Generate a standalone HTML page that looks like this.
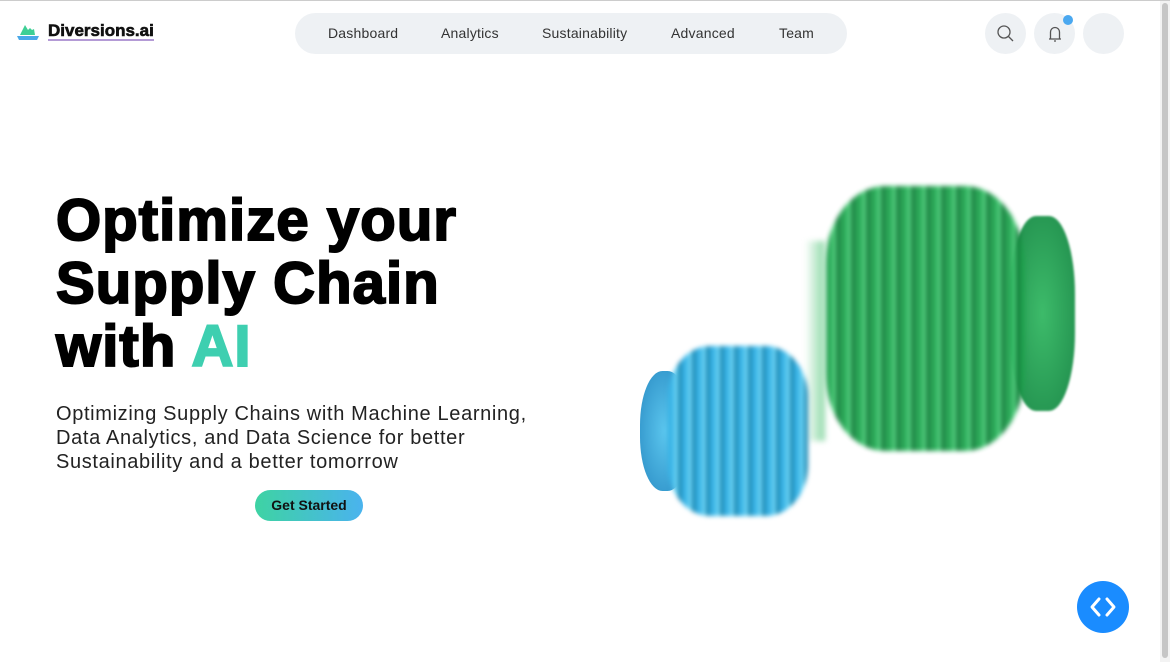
<!DOCTYPE html>
<html><head><style>
*{margin:0;padding:0;box-sizing:border-box}
body{width:1170px;height:661px;overflow:hidden;background:#fff;font-family:"Liberation Sans",sans-serif;position:relative;border-top:1px solid #ccc}
.logo{position:absolute;left:16px;top:21px;display:flex;align-items:center}
.logo span{font-weight:bold;font-size:17px;margin-left:8px;color:#111;border-bottom:2px solid #b49bd6;line-height:16px;-webkit-text-stroke:0.6px #111}
.nav{position:absolute;left:295px;top:12px;width:552px;height:41px;background:#eef1f4;border-radius:21px;font-size:14px;color:#333;letter-spacing:0.2px}
.nav a{position:absolute;top:12px}
.c{position:absolute;top:12px;width:41px;height:41px;border-radius:50%;background:#eef1f4}
h1{position:absolute;left:56px;top:188px;font-size:58px;line-height:63px;font-weight:900;color:#000;letter-spacing:1.1px;-webkit-text-stroke:2px #000}
h1 b{color:#3ecfb0;-webkit-text-stroke:2px #3ecfb0}
p{position:absolute;left:56px;top:401px;font-size:20px;line-height:24px;color:#222;letter-spacing:0.65px}
.btn{position:absolute;left:255px;top:489px;width:108px;height:31px;border-radius:16px;background:linear-gradient(90deg,#3ed3a3,#4ab3ee);font-size:14px;font-weight:bold;text-align:center;line-height:31px;color:#111}
.sb{position:absolute;right:0;top:0;width:10px;height:661px;background:#f3f3f3}
.sb div{position:absolute;left:2px;top:2px;width:6px;height:655px;border-radius:3px;background:#c6c6c6}
.fab{position:absolute;left:1077px;top:580px;width:52px;height:52px;border-radius:50%;background:#1a8cff}
</style></head><body>
<div class="logo"><svg width="24" height="20" viewBox="0 0 24 20"><path d="M4 13 L9 3 L12 8 L14 6 L16 8 L18 7 L19 13Z" fill="#3ecf95"/><path d="M1 14 H23 L21 18 H3Z" fill="#4aa8e8"/></svg><span>Diversions.ai</span></div>
<div class="nav"><a style="left:33px">Dashboard</a><a style="left:146px">Analytics</a><a style="left:247px">Sustainability</a><a style="left:376px">Advanced</a><a style="left:484px">Team</a></div>
<div class="c" style="left:985px"><svg width="41" height="41"><circle cx="19" cy="19" r="6" fill="none" stroke="#555" stroke-width="1.3"/><path d="M23.5 23.5 L28 28" stroke="#555" stroke-width="1.3"/></svg></div>
<div class="c" style="left:1034px"><svg width="41" height="41"><path d="M15 26 H27 M16.5 26 V19 a4.5 4.5 0 0 1 9 0 V26 M20 28 h2" fill="none" stroke="#555" stroke-width="1.3"/></svg></div>
<div style="position:absolute;left:1063px;top:14px;width:10px;height:10px;border-radius:50%;background:#4aa8f0"></div>
<div class="c" style="left:1083px"></div>
<h1>Optimize your<br>Supply Chain<br>with <b>AI</b></h1>
<p>Optimizing Supply Chains with Machine Learning,<br>Data Analytics, and Data Science for better<br>Sustainability and a better tomorrow</p>
<div class="btn">Get Started</div>
<div style="position:absolute;left:1010px;top:215px;width:65px;height:195px;border-radius:40%;background:radial-gradient(#3dbb6a,#1e8a4a);filter:blur(1px)"></div>
<div style="position:absolute;left:825px;top:185px;width:200px;height:265px;border-radius:30%;background:repeating-linear-gradient(90deg,#1fa24e 0 7px,#4ad07a 7px 11px,#137a3a 11px 15px),#2ea85a;filter:blur(2.5px);opacity:.95"></div>
<div style="position:absolute;left:805px;top:240px;width:20px;height:200px;background:linear-gradient(90deg,#fff,#8fd9a8);filter:blur(3px)"></div>
<div style="position:absolute;left:640px;top:370px;width:50px;height:120px;border-radius:45%;background:radial-gradient(#5bc6ee,#2a8cc4)"></div>
<div style="position:absolute;left:668px;top:345px;width:140px;height:170px;border-radius:30%;background:repeating-linear-gradient(90deg,#3ab4e6 0 6px,#6fd5f5 6px 10px,#1f8ab4 10px 14px);filter:blur(2.5px)"></div>
<div class="fab"><svg width="52" height="52"><path d="M22 18 L15 26 L22 34 M30 18 L37 26 L30 34" fill="none" stroke="#fff" stroke-width="3" stroke-linecap="round" stroke-linejoin="round"/></svg></div>
<div class="sb"><div></div></div>
</body></html>
